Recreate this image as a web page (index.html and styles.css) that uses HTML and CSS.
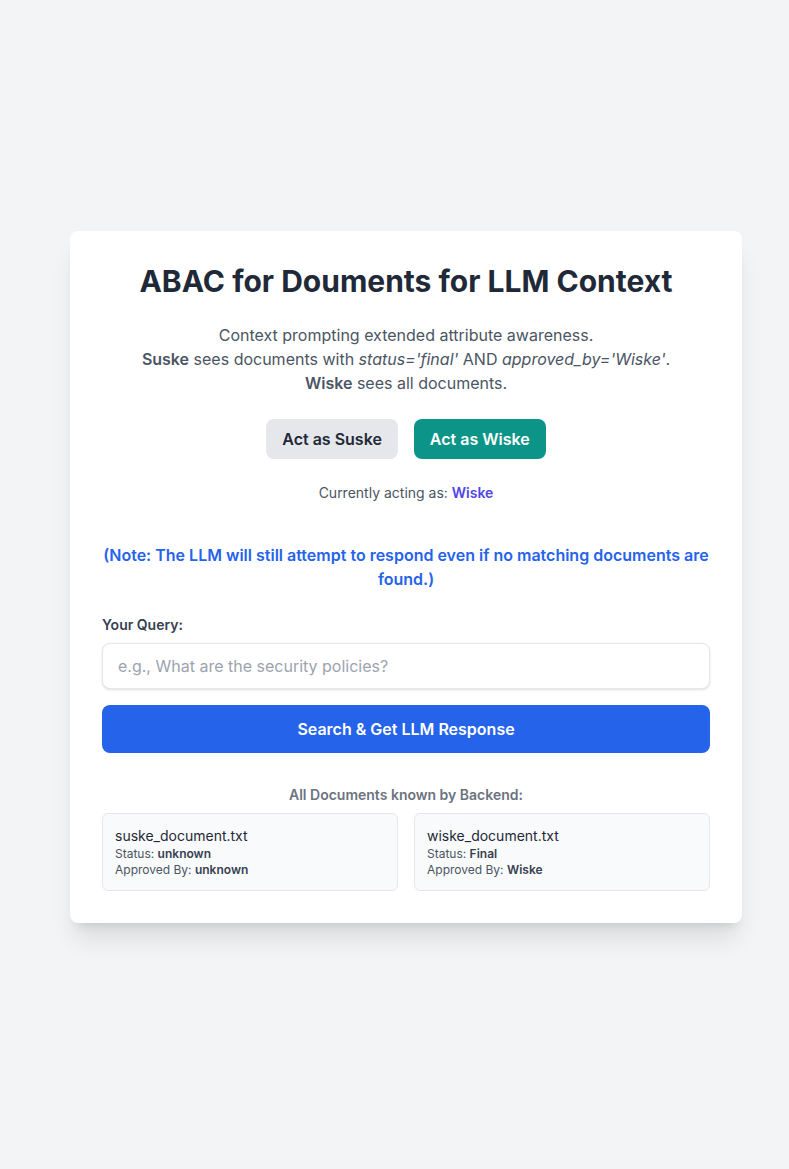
FILE: index.html
```html
<!DOCTYPE html>
<html lang="en">
<head>
<meta charset="utf-8">
<title>ABAC for Documents</title>
<link rel="stylesheet" href="styles.css">
</head>
<body>
<div class="page">
  <main class="card">
    <h1 class="title">ABAC for Douments for LLM Context</h1>
    <p class="intro">
      Context prompting extended attribute awareness.<br>
      <strong>Suske</strong> sees documents with <em>status='final'</em> AND <em>approved_by='Wiske'</em>.<br>
      <strong>Wiske</strong> sees all documents.
    </p>
    <div class="actors">
      <button class="btn btn-suske">Act as Suske</button>
      <button class="btn btn-wiske">Act as Wiske</button>
    </div>
    <p class="current">Currently acting as: <span class="current-name">Wiske</span></p>
    <p class="note">(Note: The LLM will still attempt to respond even if no matching documents are found.)</p>
    <label class="label" for="q">Your Query:</label>
    <input id="q" class="query" type="text" placeholder="e.g., What are the security policies?">
    <button class="btn-search">Search &amp; Get LLM Response</button>
    <h2 class="docs-title">All Documents known by Backend:</h2>
    <div class="docs">
      <div class="doc">
        <div class="doc-name">suske_document.txt</div>
        <div class="doc-meta">Status: <b>unknown</b></div>
        <div class="doc-meta">Approved By: <b>unknown</b></div>
      </div>
      <div class="doc">
        <div class="doc-name">wiske_document.txt</div>
        <div class="doc-meta">Status: <b>Final</b></div>
        <div class="doc-meta">Approved By: <b>Wiske</b></div>
      </div>
    </div>
  </main>
</div>
</body>
</html>
```

FILE: styles.css
```css
* { box-sizing: border-box; }
html, body { margin: 0; padding: 0; }
body {
  background: #f3f4f6;
  font-family: Inter, "Noto Sans", sans-serif;
  color: #1f2937;
  line-height: 1.5;
}
.page {
  min-height: 1169px;
  display: flex;
  align-items: center;
  justify-content: center;
  padding: 0 0 16px 23px;
}
.card {
  width: 672px;
  background: #ffffff;
  border-radius: 8px;
  padding: 32px;
  box-shadow: 0 20px 25px -5px rgba(0,0,0,0.1), 0 8px 10px -6px rgba(0,0,0,0.1);
}
.title {
  margin: 0 0 24px;
  font-size: 30px;
  line-height: 36px;
  font-weight: 700;
  text-align: center;
  color: #1f2937;
}
.intro {
  margin: 0 0 24px;
  text-align: center;
  color: #4b5563;
  font-size: 16px;
  line-height: 24px;
}
.intro strong { font-weight: 600; }
.actors {
  display: flex;
  justify-content: center;
  gap: 16px;
  margin-bottom: 24px;
}
.btn {
  font-family: inherit;
  font-size: 16px;
  line-height: 24px;
  font-weight: 600;
  padding: 8px 16px;
  border: none;
  border-radius: 8px;
  cursor: pointer;
}
.btn-suske { background: #e5e7eb; color: #1f2937; }
.btn-wiske { background: #0d9488; color: #ffffff; }
.current {
  margin: 0 0 40px;
  text-align: center;
  font-size: 14px;
  line-height: 20px;
  color: #4b5563;
}
.current-name { color: #4f46e5; font-weight: 600; }
.note {
  margin: 0 0 24px;
  text-align: center;
  color: #2563eb;
  font-weight: 600;
  font-size: 16px;
  line-height: 24px;
}
.label {
  display: block;
  margin-bottom: 8px;
  font-size: 14px;
  line-height: 20px;
  font-weight: 600;
  color: #374151;
}
.query {
  display: block;
  width: 100%;
  font-family: inherit;
  font-size: 16px;
  line-height: 24px;
  padding: 10px 15px;
  border: 1px solid #e5e7eb;
  border-radius: 8px;
  box-shadow: 0 1px 3px 0 rgba(0,0,0,0.1), 0 1px 2px -1px rgba(0,0,0,0.1);
  color: #1f2937;
  background: #fff;
  outline: none;
}
.query::placeholder { color: #9ca3af; }
.btn-search {
  display: block;
  width: 100%;
  margin-top: 16px;
  font-family: inherit;
  font-size: 16px;
  line-height: 24px;
  font-weight: 600;
  padding: 12px 16px;
  border: none;
  border-radius: 8px;
  background: #2563eb;
  color: #ffffff;
  cursor: pointer;
}
.docs-title {
  margin: 32px 0 8px;
  text-align: center;
  font-size: 14px;
  line-height: 20px;
  font-weight: 600;
  color: #6b7280;
}
.docs {
  display: grid;
  grid-template-columns: 1fr 1fr;
  gap: 16px;
}
.doc {
  background: #f9fafb;
  border: 1px solid #e5e7eb;
  border-radius: 6px;
  padding: 12px;
}
.doc-name {
  font-size: 14px;
  line-height: 20px;
  font-weight: 400;
  color: #1f2937;
}
.doc-meta {
  font-size: 12px;
  line-height: 16px;
  color: #4b5563;
}
.doc-meta b { font-weight: 600; color: #374151; }
```
